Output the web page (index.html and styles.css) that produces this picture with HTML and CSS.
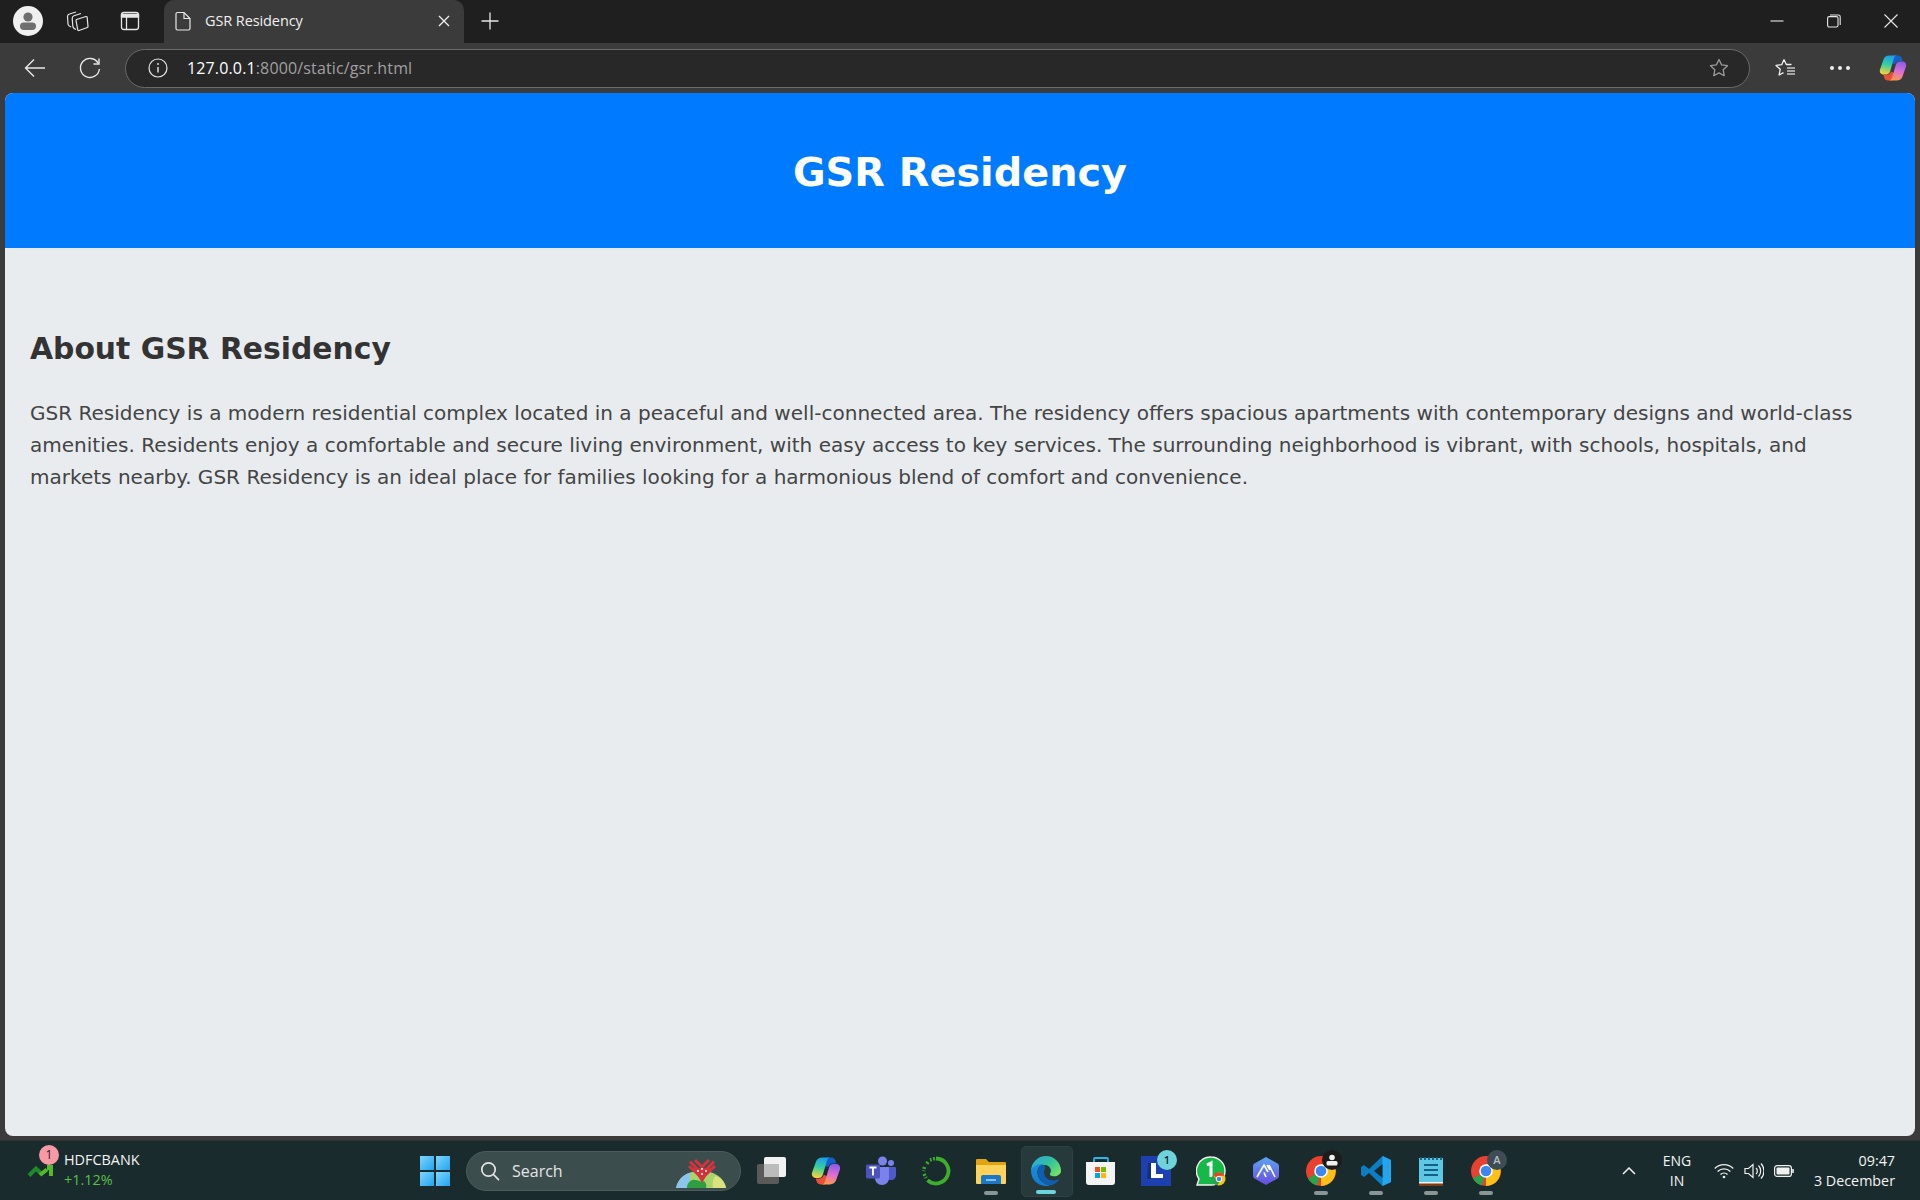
FILE: index.html
```html
<!DOCTYPE html>
<html lang="en">
<head>
<meta charset="utf-8">
<title>GSR Residency</title>
<link rel="stylesheet" href="styles.css">
</head>
<body>
<div class="window">
  <div class="titlebar">
    <div class="tb-btn profile-slot">
      <svg class="i30" viewBox="0 0 30 30"><circle cx="15" cy="15" r="15" fill="#f0f0f0"/><circle cx="15" cy="11" r="4.6" fill="#6f6f6f"/><rect x="7" y="16.5" width="16" height="7.5" rx="3.7" fill="#6f6f6f"/></svg>
    </div>
    <div class="tb-btn collections">
      <svg class="i24" viewBox="0 0 24 24" fill="none" stroke="#e6e6e6" stroke-width="1.2" stroke-linejoin="round"><path d="M11.500 10.500L21 7.500a1 1 0 0 1 1.200 1L23 17.500a1 1 0 0 1-.7 1L14 21.500a1 1 0 0 1-1.300-.9L11 11.500a1 1 0 0 1 .5-1z"/><path d="M11 20.500Q8 19.500 7.800 17L7.200 9.500Q7.200 7.500 9 6.800L16 4.500"/><path d="M6.200 18Q3.200 17 3 15L2.500 7.500Q2.500 5.500 4.500 5L11 3"/></svg>
    </div>
    <div class="tb-btn vtabs">
      <svg class="i24" viewBox="0 0 24 24" fill="none" stroke="#e6e6e6" stroke-width="1.3"><rect x="3.500" y="3.500" width="17" height="17" rx="2.500"/><path d="M3.500 5.500h17v2.500h-17z" fill="#e6e6e6"/><path d="M8.500 8v12.500"/></svg>
    </div>
    <div class="tab">
      <svg class="i20" viewBox="0 0 20 20" fill="none" stroke="#e8e8e8" stroke-width="1.2"><path d="M3 3a1.500 1.500 0 0 1 1.500-1.500h6.500l6 6v10a1.500 1.500 0 0 1-1.500 1.500h-11a1.500 1.500 0 0 1-1.500-1.500z"/><path d="M11 1.500v6h6"/></svg>
      <span class="tab-title">GSR Residency</span>
      <svg class="tab-close" viewBox="0 0 12 12" stroke="#f0f0f0" stroke-width="1.3"><path d="M1 1l10 10M11 1L1 11"/></svg>
    </div>
    <div class="tb-btn newtab">
      <svg class="i20" viewBox="0 0 20 20" stroke="#e8e8e8" stroke-width="1.3"><path d="M10 1.500v17M1.500 10h17"/></svg>
    </div>
    <div class="win-controls">
      <svg class="i14" viewBox="0 0 14 14" stroke="#e8e8e8" stroke-width="1.100"><path d="M0.500 7h13"/></svg>
      <svg class="i14" viewBox="0 0 14 14" fill="none" stroke="#e8e8e8" stroke-width="1.100"><rect x="0.600" y="2.600" width="10.400" height="10.400" rx="1.600"/><path d="M3 1h8.400a1.800 1.800 0 0 1 1.800 1.800V11"/></svg>
      <svg class="i14" viewBox="0 0 14 14" stroke="#e8e8e8" stroke-width="1.100"><path d="M0.500 0.500l13 13M13.500 0.500l-13 13"/></svg>
    </div>
  </div>

  <div class="toolbar">
    <div class="nav-btn back">
      <svg class="i24" viewBox="0 0 24 24" fill="none" stroke="#e8e8e8" stroke-width="1.400"><path d="M22 12H2.500M11 3.500L2.500 12l8.500 8.500"/></svg>
    </div>
    <div class="nav-btn reload">
      <svg class="i24" viewBox="0 0 24 24" fill="none" stroke="#e8e8e8" stroke-width="1.400"><path d="M21 2.500V8h-5.500"/><path d="M20.200 7.200A9.500 9.500 0 1 0 21.400 13"/></svg>
    </div>
    <div class="address">
      <svg class="i20" viewBox="0 0 20 20" fill="none" stroke="#e8e8e8" stroke-width="1.200"><circle cx="10" cy="10" r="9"/><path d="M10 9v5.500" stroke-width="1.400"/><circle cx="10" cy="6" r="0.900" fill="#e8e8e8" stroke="none"/></svg>
      <span class="url"><span class="host">127.0.0.1</span>:8000/static/gsr.html</span>
      <svg class="i20 addr-star" viewBox="0 0 20 20" fill="none" stroke="#9a9a9a" stroke-width="1.300" stroke-linejoin="round"><path d="M10 1.500l2.600 5.400 5.900.8-4.300 4.100 1 5.900-5.200-2.800-5.200 2.800 1-5.900-4.300-4.100 5.900-.8z"/></svg>
    </div>
    <div class="tool-right">
      <svg class="i20" viewBox="0 0 20 20" fill="none" stroke="#f0f0f0" stroke-width="1.300" stroke-linejoin="round"><path d="M9 1.500l2.300 5h5.200M9 1.500L6.700 6.700 1 7.400l4.200 3.900-1.100 5.700 4.400-2.400"/><path d="M12 10h8M12 13h8M12 16h8" stroke="#c8c8c8"/></svg>
      <div class="dots"><i></i><i></i><i></i></div>
      <svg class="i28" viewBox="0 0 28 28"><defs>
        <linearGradient id="cpA" x1="0.600" y1="0" x2="0.400" y2="1"><stop offset="0" stop-color="#1c9cf0"/><stop offset=".5" stop-color="#35d0a0"/><stop offset="1" stop-color="#f7d33c"/></linearGradient>
        <linearGradient id="cpB" x1="0.600" y1="0" x2="0.400" y2="1"><stop offset="0" stop-color="#8a5ce6"/><stop offset=".5" stop-color="#e06cd8"/><stop offset="1" stop-color="#fb9a4a"/></linearGradient></defs>
        <path d="M15 1.500h4c2.500 0 4 1.800 4.500 5.500h-3c-2.200 0-3.800 1.300-4.500 3.500L13 9z" fill="#1560c8"/>
        <path d="M13 26.500H9c-2.500 0-4-1.800-4.500-5.500h3c2.200 0 3.800-1.300 4.500-3.500L15 19z" fill="#e8503a"/>
        <path d="M10.500 1.500H18c-1.600 0-2.600 1.200-3.200 3.200L11.200 17c-.6 2-1.800 3.500-4 3.500H4.500c-2.800 0-4.300-2.500-3.500-5L4.500 5.500c.8-2.500 3-4 6-4z" fill="url(#cpA)"/>
        <path d="M17.500 26.500H10c1.600 0 2.600-1.200 3.200-3.200L16.800 11c.6-2 1.800-3.500 4-3.500h2.700c2.800 0 4.300 2.500 3.500 5L23.500 22.500c-.8 2.500-3 4-6 4z" fill="url(#cpB)"/>
      </svg>
    </div>
  </div>

  <div class="viewport">
    <div class="page">
      <header class="site-header"><h1>GSR Residency</h1></header>
      <main class="content">
        <h2>About GSR Residency</h2>
        <p>GSR Residency is a modern residential complex located in a peaceful and well-connected area. The residency offers spacious apartments with contemporary designs and world-class amenities. Residents enjoy a comfortable and secure living environment, with easy access to key services. The surrounding neighborhood is vibrant, with schools, hospitals, and markets nearby. GSR Residency is an ideal place for families looking for a harmonious blend of comfort and convenience.</p>
      </main>
    </div>
  </div>

  <div class="taskbar">
    <div class="stock">
      <div class="stock-icon">
        <svg class="stock-chart" viewBox="0 0 26 14" fill="none" stroke-width="4"><path d="M2 11.500L9 4.500l5.500 5.500" stroke="#1c8a2a"/><path d="M13 11l7-5.500" stroke="#55b92a"/><path d="M20 1h6v11h-4V6h-2z" fill="#55b92a" stroke="none"/></svg>
        <span class="stock-badge">1</span>
      </div>
      <div class="stock-text"><span class="stock-name">HDFCBANK</span><span class="stock-chg">+1.12%</span></div>
    </div>
    <div class="win-logo"><i></i><i></i><i></i><i></i></div>
    <div class="search">
      <svg class="i20" viewBox="0 0 20 20" fill="none" stroke="#e4e4e4" stroke-width="1.700"><circle cx="8.500" cy="8.500" r="6.700"/><path d="M13.500 13.500l5 5.200" stroke-linecap="round"/></svg>
      <span class="search-label">Search</span>
      <svg class="search-art" viewBox="0 0 50 29"><path d="M0 29C2 18 12 12 25 12s23 6 25 17z" fill="#a9d36c"/><path d="M0 29C2 21 7 15 15 13.500c-2 5-1 11 1 15.500z" fill="#8cc4ee"/><path d="M11 29c0-5 4-9 8-8 4 0 7 3 9 1 2 2 3 4 2 7z" fill="#2f9e41"/><path d="M37 29c-1-6 0-10 3-12 5 2 9 6 10 12z" fill="#d9e27c"/><path d="M17 9h18l-9 15z" fill="#d3343c"/><path d="M14 2.500L26 15 38 2.500M19 1l7 7 7-7M13 7l13 12L39 7" fill="none" stroke="#d3343c" stroke-width="3"/><circle cx="22" cy="12" r="1" fill="#fff"/><circle cx="30" cy="12" r="1" fill="#fff"/><circle cx="26" cy="10" r="1" fill="#fff"/><circle cx="26" cy="15" r="1" fill="#fff"/></svg>
    </div>
    <div class="apps">
      <div class="app">
        <svg class="i30" viewBox="0 0 30 30"><rect x="1" y="8" width="22" height="20" rx="2" fill="#5a5a5a"/><rect x="8" y="1" width="22" height="20" rx="2" fill="#f2f2f2"/><rect x="8" y="8" width="15" height="13" fill="#bcbcbc"/></svg>
      </div>
      <div class="app">
        <svg class="i30" viewBox="0 0 28 28"><defs>
        <linearGradient id="cpC" x1="0.600" y1="0" x2="0.400" y2="1"><stop offset="0" stop-color="#1c9cf0"/><stop offset=".5" stop-color="#35d0a0"/><stop offset="1" stop-color="#f7d33c"/></linearGradient>
        <linearGradient id="cpD" x1="0.600" y1="0" x2="0.400" y2="1"><stop offset="0" stop-color="#8a5ce6"/><stop offset=".5" stop-color="#e06cd8"/><stop offset="1" stop-color="#fb9a4a"/></linearGradient></defs>
        <path d="M15 1.500h4c2.500 0 4 1.800 4.500 5.500h-3c-2.200 0-3.800 1.300-4.500 3.500L13 9z" fill="#1560c8"/>
        <path d="M13 26.500H9c-2.500 0-4-1.800-4.500-5.500h3c2.200 0 3.800-1.300 4.500-3.500L15 19z" fill="#e8503a"/>
        <path d="M10.500 1.500H18c-1.600 0-2.600 1.200-3.200 3.200L11.200 17c-.6 2-1.800 3.500-4 3.500H4.500c-2.800 0-4.300-2.500-3.500-5L4.500 5.500c.8-2.500 3-4 6-4z" fill="url(#cpC)"/>
        <path d="M17.500 26.500H10c1.600 0 2.600-1.200 3.200-3.200L16.800 11c.6-2 1.800-3.500 4-3.500h2.700c2.800 0 4.300 2.500 3.500 5L23.500 22.500c-.8 2.500-3 4-6 4z" fill="url(#cpD)"/></svg>
      </div>
      <div class="app">
        <svg class="i30" viewBox="0 0 30 30"><circle cx="25" cy="7" r="3" fill="#7b83eb"/><circle cx="16.500" cy="5" r="4.500" fill="#7b83eb"/><path d="M20 11h9a1 1 0 0 1 1 1v7c0 3-2 5-5 5s-5-2-5-5z" fill="#5059c9"/><path d="M9 11h14v11c0 4-3 7-7 7s-7-3-7-7z" fill="#7b83eb"/><rect x="0" y="8.500" width="14" height="14" rx="1.500" fill="#4b53bc"/><path d="M3.500 11.500h7M7 11.500v8" stroke="#fff" stroke-width="1.900" fill="none"/></svg>
      </div>
      <div class="app">
        <svg class="i30" viewBox="0 0 30 30" fill="none"><path d="M15 2.500a12.500 12.500 0 1 1-8.500 21.700" stroke="#3fae2a" stroke-width="3.800"/><path d="M14 2.500L9 4M7 6L5 9M3.500 11L2.500 15M3 18L5 22" stroke="#3fae2a" stroke-width="3.500" stroke-dasharray="2 1.500"/></svg>
      </div>
      <div class="app app-running">
        <svg class="i30" viewBox="0 0 30 30"><path d="M0 4a1 1 0 0 1 1-1h9l3 3h16a1 1 0 0 1 1 1v3H0z" fill="#e0a412"/><path d="M0 9h30v18a1 1 0 0 1-1 1H1a1 1 0 0 1-1-1z" fill="#fdd35c"/><path d="M5 28v-7a2 2 0 0 1 2-2h16a2 2 0 0 1 2 2v7z" fill="#1b78c9"/><path d="M10 24h10" stroke="#bfe0f7" stroke-width="1.400"/></svg>
      </div>
      <div class="app app-active">
        <svg class="i30" viewBox="0 0 30 30"><defs>
          <linearGradient id="edgeA" x1="0" y1="0" x2="1" y2="0.700"><stop offset="0" stop-color="#2aa6e8"/><stop offset=".55" stop-color="#32c0a0"/><stop offset="1" stop-color="#6fe06a"/></linearGradient>
          <linearGradient id="edgeB" x1="0" y1="0" x2="0" y2="1"><stop offset="0" stop-color="#1d8fe0"/><stop offset="1" stop-color="#1478c8"/></linearGradient></defs>
          <path d="M0 15A15 15 0 0 1 30 15c0 4-5 6-9 5-2.500-.6-2.500-2-1.500-3.500 1.500-2.500-1-7.500-5.500-7.500C7 9 2 11 0 15z" fill="url(#edgeA)"/>
          <path d="M0 15C1.500 10 7 7.500 12 8.500 8 9.500 6 13 6.500 17.500 7 23 12 28 19 29.500A15 15 0 0 1 0 15z" fill="url(#edgeB)"/>
          <path d="M12 8.500C8 9.500 6.500 13.500 7 18 7.500 23.500 13 28.500 19 29.500c4-.8 7.500-3 9.500-6.500-3 1.500-9 2.500-12.500-.5-3-2.500-3.500-6-2.500-8.500.8-2 1-4.500-1.500-5.500z" fill="#0f5fae"/></svg>
      </div>
      <div class="app">
        <svg class="i30" viewBox="0 0 30 30" fill="none"><path d="M8 8V3a1 1 0 0 1 1-1h12a1 1 0 0 1 1 1v5" stroke="#29b6e8" stroke-width="1.800"/><path d="M0 6h29v20a3 3 0 0 1-3 3H3a3 3 0 0 1-3-3z" fill="#f4f4f4"/><rect x="9" y="11" width="5" height="5" fill="#f25022"/><rect x="15" y="11" width="5" height="5" fill="#7fba00"/><rect x="9" y="17" width="5" height="5" fill="#00a4ef"/><rect x="15" y="17" width="5" height="5" fill="#ffb900"/></svg>
      </div>
      <div class="app">
        <svg class="i30" viewBox="0 0 30 30"><rect width="30" height="30" fill="#1e3fae"/><path d="M10 7h-3l-1 16 4 0z" fill="#12307f"/><path d="M10 7h5v11h7v4H10z" fill="#fff"/></svg>
        <span class="app-badge badge-teal">1</span>
      </div>
      <div class="app">
        <svg class="i30" viewBox="0 0 30 30"><path d="M15 1a14 14 0 0 1 0 28H1l2-6A14 14 0 0 1 15 1z" fill="#16b84a" stroke="#f2f2f2" stroke-width="1.400"/><path d="M11 9l4-2v14" stroke="#fff" stroke-width="3" fill="none"/><circle cx="23" cy="23" r="6.500" fill="#f2c811"/><path d="M23 16.500a6.500 6.500 0 0 1 5.600 3.300h-5.600a3.300 3.300 0 0 0-3 1.800l-2.700-3.200a6.500 6.500 0 0 1 5.700-1.900z" fill="#e8412f"/><path d="M17.300 18.700a6.500 6.500 0 0 0 4 10.600l2.300-3.500-3.500-2z" fill="#2ba24c"/><circle cx="23" cy="23" r="3.100" fill="#fff"/><circle cx="23" cy="23" r="2.300" fill="#3f87f0"/></svg>
      </div>
      <div class="app">
        <svg class="i30" viewBox="0 0 30 30"><defs><linearGradient id="hexA" x1="0" y1="0" x2="0" y2="1"><stop offset="0" stop-color="#5aa6f2"/><stop offset="1" stop-color="#6a4be0"/></linearGradient></defs><path d="M15 1l11.500 6.500a3 3 0 0 1 1.500 2.500v10a3 3 0 0 1-1.500 2.500L15 29 3.500 22.500A3 3 0 0 1 2 20V10a3 3 0 0 1 1.500-2.500z" fill="url(#hexA)"/><path d="M6 21L13 9l4 7M15 21l-2-4.500M18 9l6 12M16 9l3 5" stroke="#fff" stroke-width="1.600" fill="none"/></svg>
      </div>
      <div class="app app-running">
        <svg class="i30" viewBox="0 0 30 30"><circle cx="15" cy="15" r="15" fill="#e8412f"/><path d="M15 8h13a15 15 0 0 1-13 22z" fill="#fbc116"/><path d="M15 15L2 22.500A15 15 0 0 0 11 29.500z" fill="#2ba24c"/><circle cx="15" cy="15" r="6.800" fill="#fff"/><circle cx="15" cy="15" r="5.300" fill="#3f87f0"/></svg>
        <span class="app-badge badge-dark"><svg class="badge-person" viewBox="0 0 12 12"><circle cx="6" cy="3.500" r="2.800" fill="#f0f0f0"/><rect x="0.500" y="7" width="11" height="4.500" rx="1.500" fill="#f0f0f0"/></svg></span>
      </div>
      <div class="app app-running">
        <svg class="i30" viewBox="0 0 30 30"><path d="M21.500 0L30 4v22l-8.500 4L8 17l-5 4-3-2v-8l3-2 5 4z" fill="#0e7ec4"/><path d="M21.500 0L30 4v22l-8.500 4z" fill="#23a6ed"/><path d="M21.500 8L13 15l8.500 7z" fill="#1a2b2d"/></svg>
      </div>
      <div class="app app-running">
        <svg class="i30" viewBox="0 0 30 30"><rect x="3" y="2" width="24" height="25" fill="#5cc8e4"/><rect x="3" y="26" width="24" height="4" fill="#7a3d14"/><rect x="3" y="26" width="24" height="1.500" fill="#f3f3f3"/><path d="M5 1v3M9 1v3M13 1v3M17 1v3M21 1v3M25 1v3" stroke="#155a80" stroke-width="1.800"/><path d="M8 9h14M8 14h14M8 19h14" stroke="#145f8c" stroke-width="2"/></svg>
      </div>
      <div class="app app-running">
        <svg class="i30" viewBox="0 0 30 30"><circle cx="15" cy="15" r="15" fill="#e8412f"/><path d="M15 8h13a15 15 0 0 1-13 22z" fill="#fbc116"/><path d="M15 15L2 22.500A15 15 0 0 0 11 29.500z" fill="#2ba24c"/><circle cx="15" cy="15" r="6.800" fill="#fff"/><circle cx="15" cy="15" r="5.300" fill="#3f87f0"/></svg>
        <span class="app-badge badge-slate">A</span>
      </div>
    </div>
    <div class="tray">
      <svg class="chev" viewBox="0 0 14 8" fill="none" stroke="#f0f0f0" stroke-width="1.500"><path d="M1 7l6-6 6 6"/></svg>
      <div class="lang"><span>ENG</span><span>IN</span></div>
      <div class="tray-icons">
        <svg class="i20" viewBox="0 0 20 20" fill="none" stroke="#f0f0f0" stroke-width="1.300"><path d="M0.800 7.500a13 13 0 0 1 18.400 0M3.600 10.500a9 9 0 0 1 12.800 0M6.500 13.500a5 5 0 0 1 7 0"/><circle cx="10" cy="16" r="1.300" fill="#f0f0f0" stroke="none"/></svg>
        <svg class="i20" viewBox="0 0 20 20" fill="none" stroke="#f0f0f0" stroke-width="1.200"><path d="M1 7.500h3.500L9 3.500v13l-4.500-4H1z"/><path d="M12 7a4 4 0 0 1 0 6M14.500 4.500a8 8 0 0 1 0 11M17 2.500a11 11 0 0 1 0 15"/></svg>
        <svg class="i20" viewBox="0 0 20 20" fill="none" stroke="#f0f0f0" stroke-width="1.200"><rect x="0.600" y="4.600" width="16.800" height="10.800" rx="2.500"/><rect x="2.500" y="6.500" width="13" height="7" rx="1" fill="#f0f0f0" stroke="none"/><path d="M19 8v4" stroke-width="1.600"/></svg>
      </div>
      <div class="clock"><span>09:47</span><span>3 December</span></div>
    </div>
  </div>
</div>
</body>
</html>
```
FILE: styles.css
```css
* { box-sizing: border-box; }
html, body { margin: 0; padding: 0; height: 100%; overflow: hidden; }
body { font-family: "Open Sans", "Noto Sans", sans-serif; background: #3b3b3b; }
svg { display: block; flex: none; }
.i14 { width: 14px; height: 14px; }
.i20 { width: 20px; height: 20px; }
.i24 { width: 24px; height: 24px; }
.i28 { width: 28px; height: 28px; }
.i30 { width: 30px; height: 30px; }

.window { display: flex; flex-direction: column; height: 1200px; }

.titlebar { display: flex; align-items: center; height: 43px; padding-bottom: 1px; background: #1f1f1f; flex: none; }
.tb-btn { display: flex; align-items: center; justify-content: center; }
.profile-slot { width: 30px; margin-left: 13px; }
.collections { width: 24px; margin-left: 22px; }
.vtabs { width: 24px; margin-left: 29px; }
.tab {
  display: flex; align-items: center; align-self: flex-end; width: 300px; height: 43px; margin-bottom: -1px; margin-left: 22px;
  padding: 0 14px 1px 9px; background: #3b3b3b; border-radius: 10px 10px 0 0; color: #f0f0f0;
}
.tab-title { margin-left: 12px; margin-top: -1px; font-size: 14.500px; flex: 1; letter-spacing: -0.1px; }
.tab-close { width: 12px; height: 12px; }
.newtab { width: 20px; margin-left: 16px; }
.win-controls { display: flex; align-items: center; gap: 43px; margin-left: auto; padding-right: 22px; }

.toolbar { display: flex; align-items: center; height: 50px; background: #3b3b3b; flex: none; }
.nav-btn { display: flex; justify-content: center; width: 24px; }
.back { margin-left: 23px; }
.reload { margin-left: 31px; }
.address {
  display: flex; align-items: center; width: 1625px; height: 39px; margin-left: 23px; padding: 0 20px 0 22px;
  background: #282828; border: 1px solid #6a6a6a; border-radius: 20px;
}
.url { margin-left: 19px; font-size: 16px; color: #a0a0a0; letter-spacing: 0.14px; }
.host { color: #fff; }
.addr-star { margin-left: auto; }
.tool-right { display: flex; align-items: center; margin-left: 25px; }
.dots { display: flex; gap: 4px; margin-left: 35px; }
.dots i { width: 4px; height: 4px; border-radius: 50%; background: #eee; }
.tool-right .i28 { margin-left: 29px; }

.viewport { flex: none; height: 1047px; padding: 0 5px 4px; background: #3b3b3b; }
.page { height: 100%; background: #e9ecef; border-radius: 8px; overflow: hidden; }
.site-header { height: 155px; padding-top: 52px; background: #007bff; text-align: center; }
h1 { margin: 0; font: bold 39.800px/1.4 "DejaVu Sans", Verdana, sans-serif; color: #fff; }
.content { padding: 81px 25px 0; font-family: "DejaVu Sans", Verdana, sans-serif; }
h2 { margin: 0; font-size: 29.800px; line-height: 40px; color: #333; }
p { margin: 28px 0 0; font-size: 20.040px; line-height: 32px; color: #444; }

.taskbar {
  display: flex; align-items: center; height: 60px; flex: none; background: #1a2b2d;
  border-top: 1px solid #333; color: #f4f4f4;
}
.stock { display: flex; align-items: flex-start; width: 419px; padding-left: 25px; }
.stock-icon { position: relative; width: 39px; height: 40px; }
.stock-chart { position: absolute; left: 2px; top: 13px; width: 26px; height: 14px; }
.stock-badge {
  position: absolute; left: 14px; top: -6px; width: 20px; height: 20px; border-radius: 50%;
  background: #f79aa4; color: #222; font-size: 12px; line-height: 20px; text-align: center;
}
.stock-text { display: flex; flex-direction: column; margin-top: -1px; font-size: 14.400px; line-height: 20px; }
.stock-chg { color: #5bbf47; }
.win-logo { display: grid; grid-template-columns: 14px 14px; grid-auto-rows: 14px; gap: 2px; width: 30px; margin-left: 1px; }
.win-logo i { background: linear-gradient(135deg, #7fd6fb, #21a5f0); }
.search {
  display: flex; align-items: center; width: 275px; height: 40px; margin-left: 16px; padding: 0 12px 0 13px;
  background: #3c4d4e; border: 1px solid #4c5c5d; border-radius: 20px;
}
.search-label { margin-left: 12px; font-size: 16px; color: #e4e4e4; flex: 1; }
.search-art { width: 50px; height: 29px; margin-top: 5px; margin-right: 2px; }
.apps { display: flex; align-items: center; gap: 25px; margin-left: 15px; }
.app { position: relative; width: 30px; height: 30px; }
.app-running::after, .app-active::after {
  content: ""; position: absolute; left: 50%; bottom: -9px; width: 14px; height: 4px; margin-left: -7px;
  border-radius: 2px; background: #8a9696;
}
.app-active::before {
  content: ""; position: absolute; left: -10px; top: -10px; width: 50px; height: 49px;
  background: #26393b; border: 1px solid #2e4244; border-radius: 5px;
}
.app-active::after { width: 20px; margin-left: -10px; background: #6fd3dc; bottom: -8px; }
.app-active svg { position: relative; }
.app-badge {
  position: absolute; right: -6px; top: -6px; width: 20px; height: 20px; border-radius: 50%;
  display: flex; align-items: center; justify-content: center; font-size: 11px; font-weight: 600;
}
.badge-teal { background: #6fd3dc; color: #1a2b2d; }
.badge-dark { background: #1c1c1c; }
.badge-slate { background: #3e4c54; color: #b8bec2; }
.badge-person { width: 12px; height: 12px; }
.tray { display: flex; align-items: center; margin-left: auto; padding-right: 25px; color: #f4f4f4; }
.chev { width: 14px; height: 8px; }
.lang { display: flex; flex-direction: column; align-items: center; width: 40px; margin-left: 21px; font-size: 14px; line-height: 20px; }
.tray-icons { display: flex; gap: 10px; margin-left: 17px; }
.clock { display: flex; flex-direction: column; align-items: flex-end; width: 90px; margin-left: 11px; font-size: 14.300px; line-height: 20px; }
```
